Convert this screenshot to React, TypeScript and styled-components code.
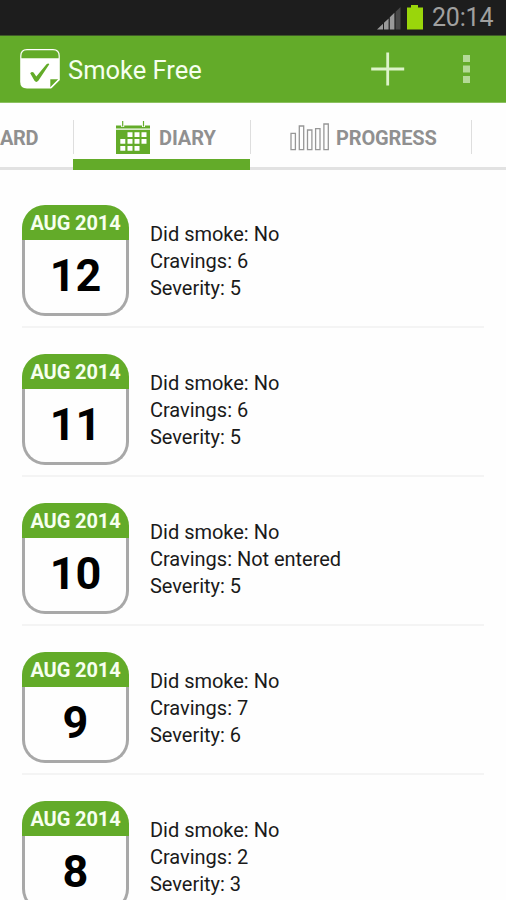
import React from "react";
import styled, { createGlobalStyle } from "styled-components";

const GREEN = "#63ab29";

const GlobalStyle = createGlobalStyle`
  *, *::before, *::after { box-sizing: border-box; }
  html, body { margin: 0; height: 900px; overflow: hidden; background: #fefefe; }
  body { font-family: Roboto, "Liberation Sans", sans-serif; }
  svg { display: block; flex: none; }
`;

const Screen = styled.div`
  width: 506px;
  height: 900px;
  overflow: hidden;
  display: flex;
  flex-direction: column;
  background: #fefefe;
`;

const StatusBar = styled.div`
  flex: none;
  height: 36px;
  display: flex;
  justify-content: flex-end;
  padding-right: 12px;
  background: #1d1d1d;
  border-bottom: 1px solid #3f5a28;
`;

const Clock = styled.span`
  width: 62px;
  margin-left: 8px;
  font-size: 25px;
  line-height: 35px;
  letter-spacing: -0.2px;
  color: #a0a0a0;
  white-space: nowrap;
`;

const ActionBar = styled.header`
  flex: none;
  height: 67px;
  display: flex;
  align-items: center;
  padding: 0 35px 0 20px;
  background: ${GREEN};
  border-bottom: 1px solid #8cc160;
`;

const Title = styled.h1`
  flex: 1;
  margin: 2px 0 0 8px;
  font-size: 25.5px;
  font-weight: 400;
  line-height: 32px;
  color: #f6ffef;
  white-space: nowrap;
`;

const IconButton = styled.button<{ $gap?: number }>`
  margin: 0 0 0 ${(p) => p.$gap ?? 0}px;
  padding: 0;
  border: 0;
  background: none;
`;

const TabBar = styled.nav`
  flex: none;
  height: 67px;
  display: grid;
  grid-template-columns: 73px 177px 221px 35px;
  background: #fefefe;
  box-shadow: inset 0 -3px 0 #e2e2e2;
`;

const Tab = styled.div<{ $active?: boolean; $start: number; $first?: boolean }>`
  display: flex;
  align-items: center;
  padding: 12px 0 ${(p) => (p.$active ? 0 : 11)}px ${(p) => p.$start}px;
  border-bottom: ${(p) => (p.$active ? `11px solid ${GREEN}` : "0")};
  background: ${(p) => (p.$first ? "none" : "linear-gradient(#dedede, #dedede) left 17px / 1px 34px no-repeat")};
`;

const TabLabel = styled.span<{ $gap?: number; $spacing?: number }>`
  margin: 1px 0 0 ${(p) => p.$gap ?? 0}px;
  font-size: 20px;
  font-weight: 700;
  line-height: 24px;
  letter-spacing: ${(p) => p.$spacing ?? 0}px;
  color: #909090;
  white-space: nowrap;
`;

const EntryList = styled.main`
  flex: 1;
  padding: 9px 22px 0;
`;

const Entry = styled.article`
  height: 149px;
  display: flex;
  align-items: flex-start;
  padding-top: 26px;
  border-bottom: 2px solid #f4f4f4;
`;

const DateCard = styled.div`
  flex: none;
  width: 107px;
  height: 111px;
  display: flex;
  flex-direction: column;
  text-align: center;
`;

const Month = styled.div`
  flex: none;
  height: 35px;
  border-radius: 23px 23px 0 0;
  background: ${GREEN};
  font-size: 20px;
  font-weight: 700;
  line-height: 37px;
  letter-spacing: -0.1px;
  color: #f6ffef;
  white-space: nowrap;
`;

const Day = styled.div`
  flex: 1;
  border: 3px solid #a8a8a8;
  border-top: 0;
  border-radius: 0 0 23px 23px;
  font-size: 45px;
  font-weight: 700;
  line-height: 72px;
  font-kerning: none;
  color: #000;
`;

const Details = styled.div`
  margin: 16px 0 0 21px;
  font-size: 20px;
  line-height: 26.75px;
  letter-spacing: -0.02px;
  color: #1a1a1a;
  white-space: nowrap;
`;

const Signal = () => (
  <svg width="29" height="35" viewBox="0 0 29 35">
    <path d="M0 29.5L6 23.7V29.5Z" fill="#999" />
    <path d="M7 22.8L11.6 18.4V29.5H7Z" fill="#999" />
    <path d="M12.8 17.2L17.4 12.8V29.5H12.8Z" fill="#999" />
    <path d="M18.6 11.7L23.5 7V29.5H18.6Z" fill="#484848" />
  </svg>
);

const Battery = () => (
  <svg width="18" height="35" viewBox="0 0 18 35">
    <path d="M1 7.5H5V5H12V7.5H17V29.5H1Z" fill="#9ad60b" />
  </svg>
);

const Logo = () => (
  <svg width="40" height="40" viewBox="0 0 40 40">
    <path
      d="M7 0H33Q39.8 0 39.8 7V31L31 39.5H7Q.2 39.5 .2 33V7Q.2 0 7 0Z"
      fill="#fff"
    />
    <path d="M1.4 9.2V7Q1.4 1.3 7 1.3H33Q38.6 1.3 38.6 7V9.2Z" fill={GREEN} />
    <path
      d="M10.2 24.2Q12 22.2 13.6 23.6L16.3 27.6L26.5 15.2Q28.5 13.8 29.3 15.2L18.3 31.8Q16.3 34 14.5 31.8Z"
      fill={GREEN}
    />
    <path d="M30.3 30.3H38.2L30.3 38.2Z" fill={GREEN} />
    <path d="M39 30.6L31 38.8" stroke="#fff" strokeWidth="1.2" />
  </svg>
);

const Plus = () => (
  <svg width="34" height="34" viewBox="0 0 34 34">
    <path d="M16.7 .5V33.5M.2 17H33.2" stroke="#ddf3ca" strokeWidth="2.8" />
  </svg>
);

const Overflow = () => (
  <svg width="8" height="30" viewBox="0 0 8 30">
    <path d="M0 1h7v7H0zM0 11.5h7v7H0zM0 22h7v7H0z" fill="#b4da97" />
  </svg>
);

const CalendarIcon = () => (
  <svg width="34" height="33" viewBox="0 0 34 33">
    <path d="M0 4.5H34V7.5H0ZM0 8.8H34V33H0Z" fill={GREEN} />
    <path d="M6.7 0V6M27.5 0V6" stroke="#fff" strokeWidth="3" />
    <path d="M6.7 0V5.5M27.5 0V5.5" stroke={GREEN} strokeWidth="1.2" />
    <path
      d="M11.5 11.3h5v4.7h-5zM18.5 11.3h5v4.7h-5zM25.5 11.3h5v4.7h-5zM4.3 18h5v4.7h-5zM11.5 18h5v4.7h-5zM18.5 18h5v4.7h-5zM25.5 18h5v4.7h-5zM4.3 25h5v4.7h-5zM11.5 25h5v4.7h-5zM18.5 25h5v4.7h-5z"
      fill="#fff"
    />
  </svg>
);

const BarsIcon = () => (
  <svg width="40" height="28" viewBox="0 0 40 28">
    <path
      d="M1 10.3h4.4v16.4H1zM9.3 3h4.4v23.7H9.3zM17.5 7h4.4v19.7h-4.4zM25.6 5.7H30v21h-4.4zM33.9 1h4.4v25.7h-4.4z"
      fill="none"
      stroke="#979797"
      strokeWidth="1.3"
    />
  </svg>
);

const entries = [
  { day: 12, smoked: "No", cravings: "6", severity: "5" },
  { day: 11, smoked: "No", cravings: "6", severity: "5" },
  { day: 10, smoked: "No", cravings: "Not entered", severity: "5" },
  { day: 9, smoked: "No", cravings: "7", severity: "6" },
  { day: 8, smoked: "No", cravings: "2", severity: "3" },
];

export default function App() {
  return (
    <>
      <GlobalStyle />
      <Screen>
        <StatusBar>
          <Signal />
          <Battery />
          <Clock>20:14</Clock>
        </StatusBar>
        <ActionBar>
          <Logo />
          <Title>Smoke Free</Title>
          <IconButton aria-label="Add entry">
            <Plus />
          </IconButton>
          <IconButton aria-label="More options" $gap={58}>
            <Overflow />
          </IconButton>
        </ActionBar>
        <TabBar>
          <Tab $start={0} $first>
            <TabLabel $spacing={-0.4}>ARD</TabLabel>
          </Tab>
          <Tab $active $start={43}>
            <CalendarIcon />
            <TabLabel $gap={9} $spacing={-0.1}>DIARY</TabLabel>
          </Tab>
          <Tab $start={40}>
            <BarsIcon />
            <TabLabel $gap={6} $spacing={-0.15}>PROGRESS</TabLabel>
          </Tab>
          <Tab $start={0} />
        </TabBar>
        <EntryList>
          {entries.map((e) => (
            <Entry key={e.day}>
              <DateCard>
                <Month>AUG 2014</Month>
                <Day>{e.day}</Day>
              </DateCard>
              <Details>
                <div>Did smoke: {e.smoked}</div>
                <div>Cravings: {e.cravings}</div>
                <div>Severity: {e.severity}</div>
              </Details>
            </Entry>
          ))}
        </EntryList>
      </Screen>
    </>
  );
}
